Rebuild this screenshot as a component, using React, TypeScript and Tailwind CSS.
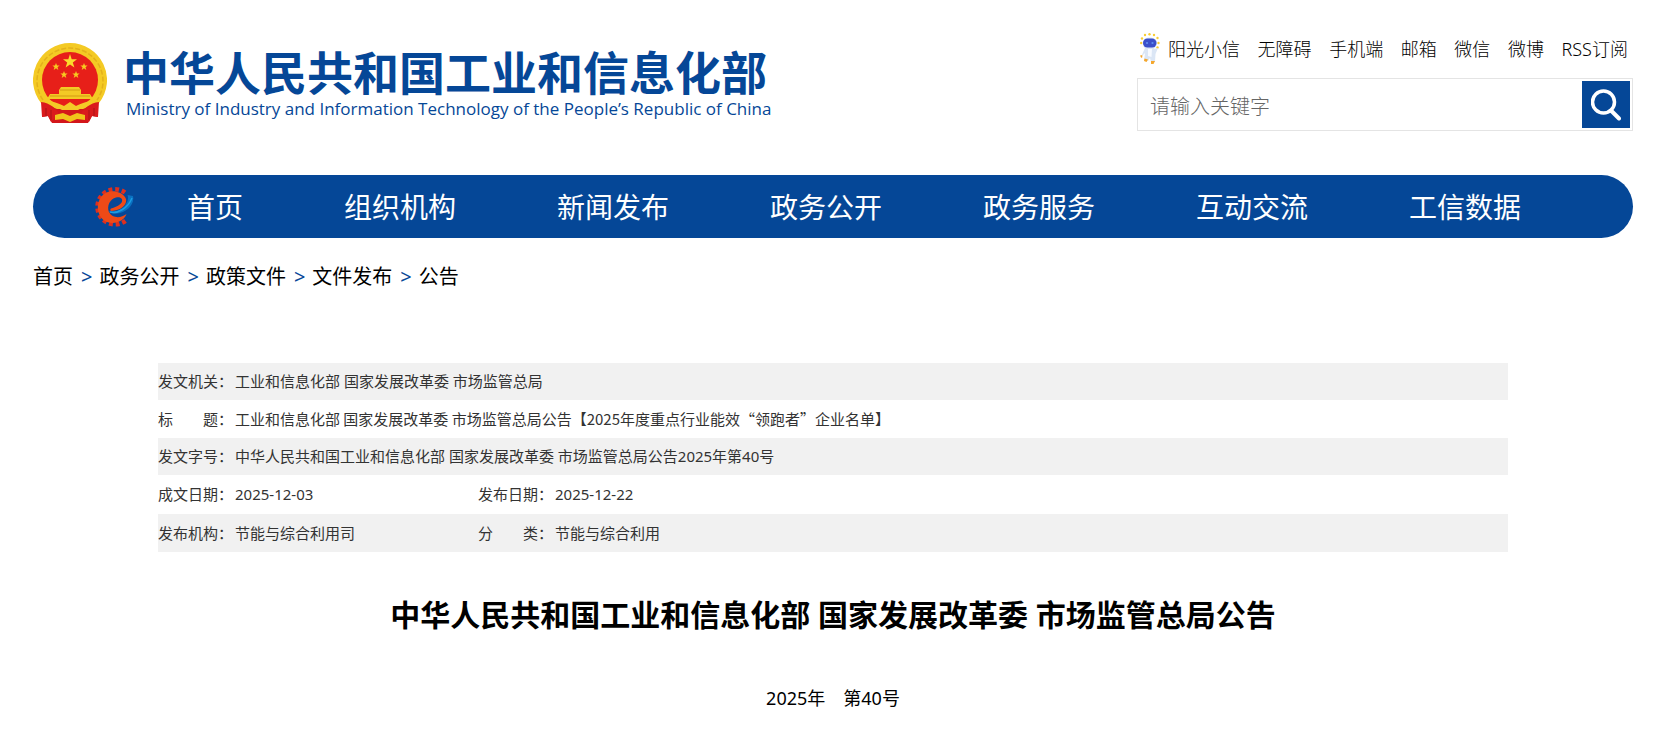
import type { ReactNode } from 'react';

const TOOL_LINKS = ['无障碍', '手机端', '邮箱', '微信', '微博', 'RSS订阅'];

const NAV_ITEMS = ['首页', '组织机构', '新闻发布', '政务公开', '政务服务', '互动交流', '工信数据'];

const CRUMBS = ['首页', '政务公开', '政策文件', '文件发布', '公告'];

function Emblem() {
  return (
    <svg viewBox="0 0 74 80" className="h-20 w-[74px] shrink-0" aria-hidden="true">
      <path d="M10 58 L9 74 L15 73 L19 80 H55 L59 73 L65 74 L64 58 Z" fill="#d3161b" />
      <path d="M37 0 A37 37 0 0 1 66 60 L50 66 H24 L8 60 A37 37 0 0 1 37 0 Z" fill="#f4ca24" />
      <path d="M10 57 A33 33 0 1 1 64 57" fill="none" stroke="#e3b11b" strokeWidth="1.500" strokeDasharray="5 2" />
      <circle cx="37" cy="37" r="28" fill="#e71f19" />
      <path d="M37 11 L38.700 16.200 L44 16.200 L39.800 19.400 L41.400 24.400 L37 21.400 L32.600 24.400 L34.200 19.400 L30 16.200 L35.300 16.200 Z" fill="#fbdc2c" />
      <g fill="#f7cb20">
        <path id="emblem-star" d="M23 20 L24 22.600 L26.600 22.600 L24.500 24.200 L25.300 27 L23 25.300 L20.700 27 L21.500 24.200 L19.400 22.600 L22 22.600 Z" />
        <use href="#emblem-star" x="28" />
        <use href="#emblem-star" x="8" y="8" />
        <use href="#emblem-star" x="20" y="8" />
      </g>
      <path d="M28 44 H46 L48 47 V51 H57 L60 56 H14 L17 51 H26 V47 Z" fill="#f3ca25" />
      <path d="M27 47 H47 M17 53 H57" stroke="#d49b12" strokeWidth="1" />
      <path d="M13 57 C22 59 27 61 31 63 L37 59 L43 63 C47 61 52 59 61 57 C57 63 50 64 45 67 H29 C24 64 17 63 13 57 Z" fill="#f4cb27" />
      <path d="M8 59 C17 60 24 66 26 71 L18 79 L15 73 L9 74 Z M66 59 C57 60 50 66 48 71 L56 79 L59 73 L65 74 Z" fill="#da1a1c" />
      <path d="M13 65 V73 M18 67 V77 M56 67 V77 M61 65 V73" stroke="#a81217" strokeWidth="1" />
      <path d="M22 72 L30 70 L37 73 L44 70 L52 72 V77 L44 76 L37 79 L30 76 L22 77 Z" fill="#f0c31b" />
    </svg>
  );
}

function Mascot() {
  return (
    <svg viewBox="0 0 20 32" className="h-8 w-5 shrink-0" aria-hidden="true">
      <g fill="#f8cd35">
        <circle cx="5" cy="2" r="1.200" />
        <circle cx="9.500" cy="1.300" r="1.200" />
        <circle cx="14" cy="2" r="1.200" />
        <circle cx="2" cy="5.500" r="1.200" />
        <circle cx="17.500" cy="5" r="1.200" />
        <circle cx="1.200" cy="10" r="1.200" />
        <circle cx="18.500" cy="10" r="1.200" />
        <circle cx="17.500" cy="14.500" r="1.200" />
      </g>
      <path d="M3 9 C3 3 16 3 17 9 C17 14 14 15 14 16 L18 15 L15.500 21 L15 29 H11 L10 25 L8 28 H4 L5 20 L1 24 L5 15 C3 14 3 12 3 9 Z" fill="#dbe6f5" />
      <path d="M8 16 L12 16 L11.500 24 L8 23 Z" fill="#f7faff" />
      <rect x="3" y="5.500" width="13.500" height="9" rx="4.500" fill="#3a4fc9" />
      <ellipse cx="7" cy="10" rx="1.200" ry="0.800" fill="#6fa5fb" />
      <ellipse cx="12.500" cy="10" rx="1.200" ry="0.800" fill="#6fa5fb" />
      <path d="M4.500 25.500 L8 26.500 L6.500 29 L4 28 Z M11 28 L15 28 L13.500 31 L11 31 Z M0.500 22 L2.500 22.500 L2 25 L0.500 24 Z" fill="#f5a72c" />
    </svg>
  );
}

function GearLogo() {
  return (
    <svg viewBox="0 0 40 40" className="h-10 w-10 shrink-0" aria-hidden="true">
      <path d="M31 5.500 A17.500 17.500 0 1 0 32.500 33" fill="none" stroke="#de2f1f" strokeWidth="4.500" strokeDasharray="3.800 2.800" />
      <path d="M31 10 C26 3 13 1.500 7 10 C1 19 4 31 13 35 C21 38 30 34 32.500 27 C27 31.500 18 31.500 15 25 C12.500 19 16 12 22 10.500 C26 9.500 29 11.500 28 14.500 C27 18 22 20 17 21.500 C16 22.500 16 23.500 17 24 C24 24 31 20 32 15 C32.500 13 32 11.500 31 10 Z" fill="#ee4a17" />
      <path d="M14.500 24 C22 25.500 30 22 33 15 C34.500 12 34 9.500 33.500 8 L39 9 C41 18 32 26 23 26.500 C19 27 16 26 14.500 24 Z" fill="#0a70c0" />
      <path d="M16 25 C24 27 34 21 38 11" fill="none" stroke="#1b9ce2" strokeWidth="1.500" />
    </svg>
  );
}

function Field({ label, children }: { label: string; children: ReactNode }) {
  return (
    <>
      <th scope="row" className="p-0 text-left font-normal whitespace-nowrap">{label}</th>
      {children}
    </>
  );
}

export default function App() {
  return (
    <div className="bg-white pr-10 pl-[33px] pb-10 font-['Noto_Sans','Noto_Sans_CJK_SC',sans-serif] text-black">
      <header className="flex items-start justify-between">
        <a href="#" className="flex pt-[43px] text-[#054797]">
          <Emblem />
          <span className="ml-4 flex flex-col whitespace-nowrap">
            <span className="pt-1 font-['Liberation_Sans','Noto_Sans_CJK_SC',sans-serif] text-[46px] leading-[54px] font-bold">
              中华人民共和国工业和信息化部
            </span>
            <span className="pl-[3px] font-['Open_Sans',sans-serif] text-[17px] leading-4 font-medium">
              Ministry of Industry and Information Technology of the People’s Republic of China
            </span>
          </span>
        </a>

        <div className="w-[496px] pt-[33px]">
          <div className="flex items-center justify-between pr-[5px] pl-[3px] text-lg leading-8 font-light whitespace-nowrap">
            <a href="#" className="flex items-center gap-2">
              <Mascot />
              阳光小信
            </a>
            {TOOL_LINKS.map((label) => (
              <a key={label} href="#">{label}</a>
            ))}
          </div>
          <form className="mt-[13px] flex h-[53px] items-center border border-[#e4e4e4] pr-[2px]">
            <input
              type="text"
              aria-label="请输入关键字"
              placeholder="请输入关键字"
              className="h-full min-w-0 flex-1 px-3 pt-1 text-xl font-light outline-none placeholder:text-[#666]"
            />
            <button type="button" aria-label="搜索" className="flex h-[47px] w-12 items-center justify-center bg-[#054797]">
              <svg viewBox="0 0 30 32" className="h-8 w-[30px]" fill="none" stroke="#fff" aria-hidden="true">
                <circle cx="12.500" cy="13" r="11" strokeWidth="3.500" />
                <path d="M20 21.500 L28 29.500" strokeWidth="4" strokeLinecap="round" />
              </svg>
            </button>
          </form>
        </div>
      </header>

      <nav className="mt-11 flex h-[63px] items-center rounded-full bg-[#054797] pl-[61px]">
        <GearLogo />
        <ul className="ml-[53px] flex gap-[101px] text-[28px] whitespace-nowrap text-white">
          {NAV_ITEMS.map((item) => (
            <li key={item}>
              <a href="#">{item}</a>
            </li>
          ))}
        </ul>
      </nav>

      <ol className="mt-[25px] flex gap-2 text-xl leading-7">
        {CRUMBS.map((crumb, i) => (
          <li key={crumb} className="flex gap-[7px]">
            {i > 0 && <span className="text-[#054797]">&gt;</span>}
            <a href="#">{crumb}</a>
          </li>
        ))}
      </ol>

      <main className="mx-auto mt-[72px] w-27/32">
        <table className="w-full table-fixed border-collapse text-[15px] text-[#333] [&_td]:p-0">
          <colgroup>
            <col className="w-[77px]" />
            <col className="w-[243px]" />
            <col className="w-[77px]" />
            <col />
          </colgroup>
          <tbody>
            <tr className="h-[37px] bg-[#f1f1f1]">
              <Field label="发文机关：">
                <td colSpan={3}>工业和信息化部 国家发展改革委 市场监管总局</td>
              </Field>
            </tr>
            <tr className="h-[38px]">
              <Field label="标　　题：">
                <td colSpan={3} className="font-['Noto_Sans_CJK_SC',sans-serif]">
                  工业和信息化部 国家发展改革委 市场监管总局公告【2025年度重点行业能效“领跑者”企业名单】
                </td>
              </Field>
            </tr>
            <tr className="h-[37px] bg-[#f1f1f1]">
              <Field label="发文字号：">
                <td colSpan={3}>中华人民共和国工业和信息化部 国家发展改革委 市场监管总局公告2025年第40号</td>
              </Field>
            </tr>
            <tr className="h-[39px]">
              <Field label="成文日期：">
                <td>2025-12-03</td>
              </Field>
              <Field label="发布日期：">
                <td>2025-12-22</td>
              </Field>
            </tr>
            <tr className="h-[38px] bg-[#f1f1f1]">
              <Field label="发布机构：">
                <td>节能与综合利用司</td>
              </Field>
              <Field label="分　　类：">
                <td>节能与综合利用</td>
              </Field>
            </tr>
          </tbody>
        </table>

        <h1 className="mt-10 text-center text-3xl leading-[46px] font-bold">
          中华人民共和国工业和信息化部 国家发展改革委 市场监管总局公告
        </h1>
        <p className="mt-[46px] text-center text-lg leading-7">2025年　第40号</p>
      </main>
    </div>
  );
}
